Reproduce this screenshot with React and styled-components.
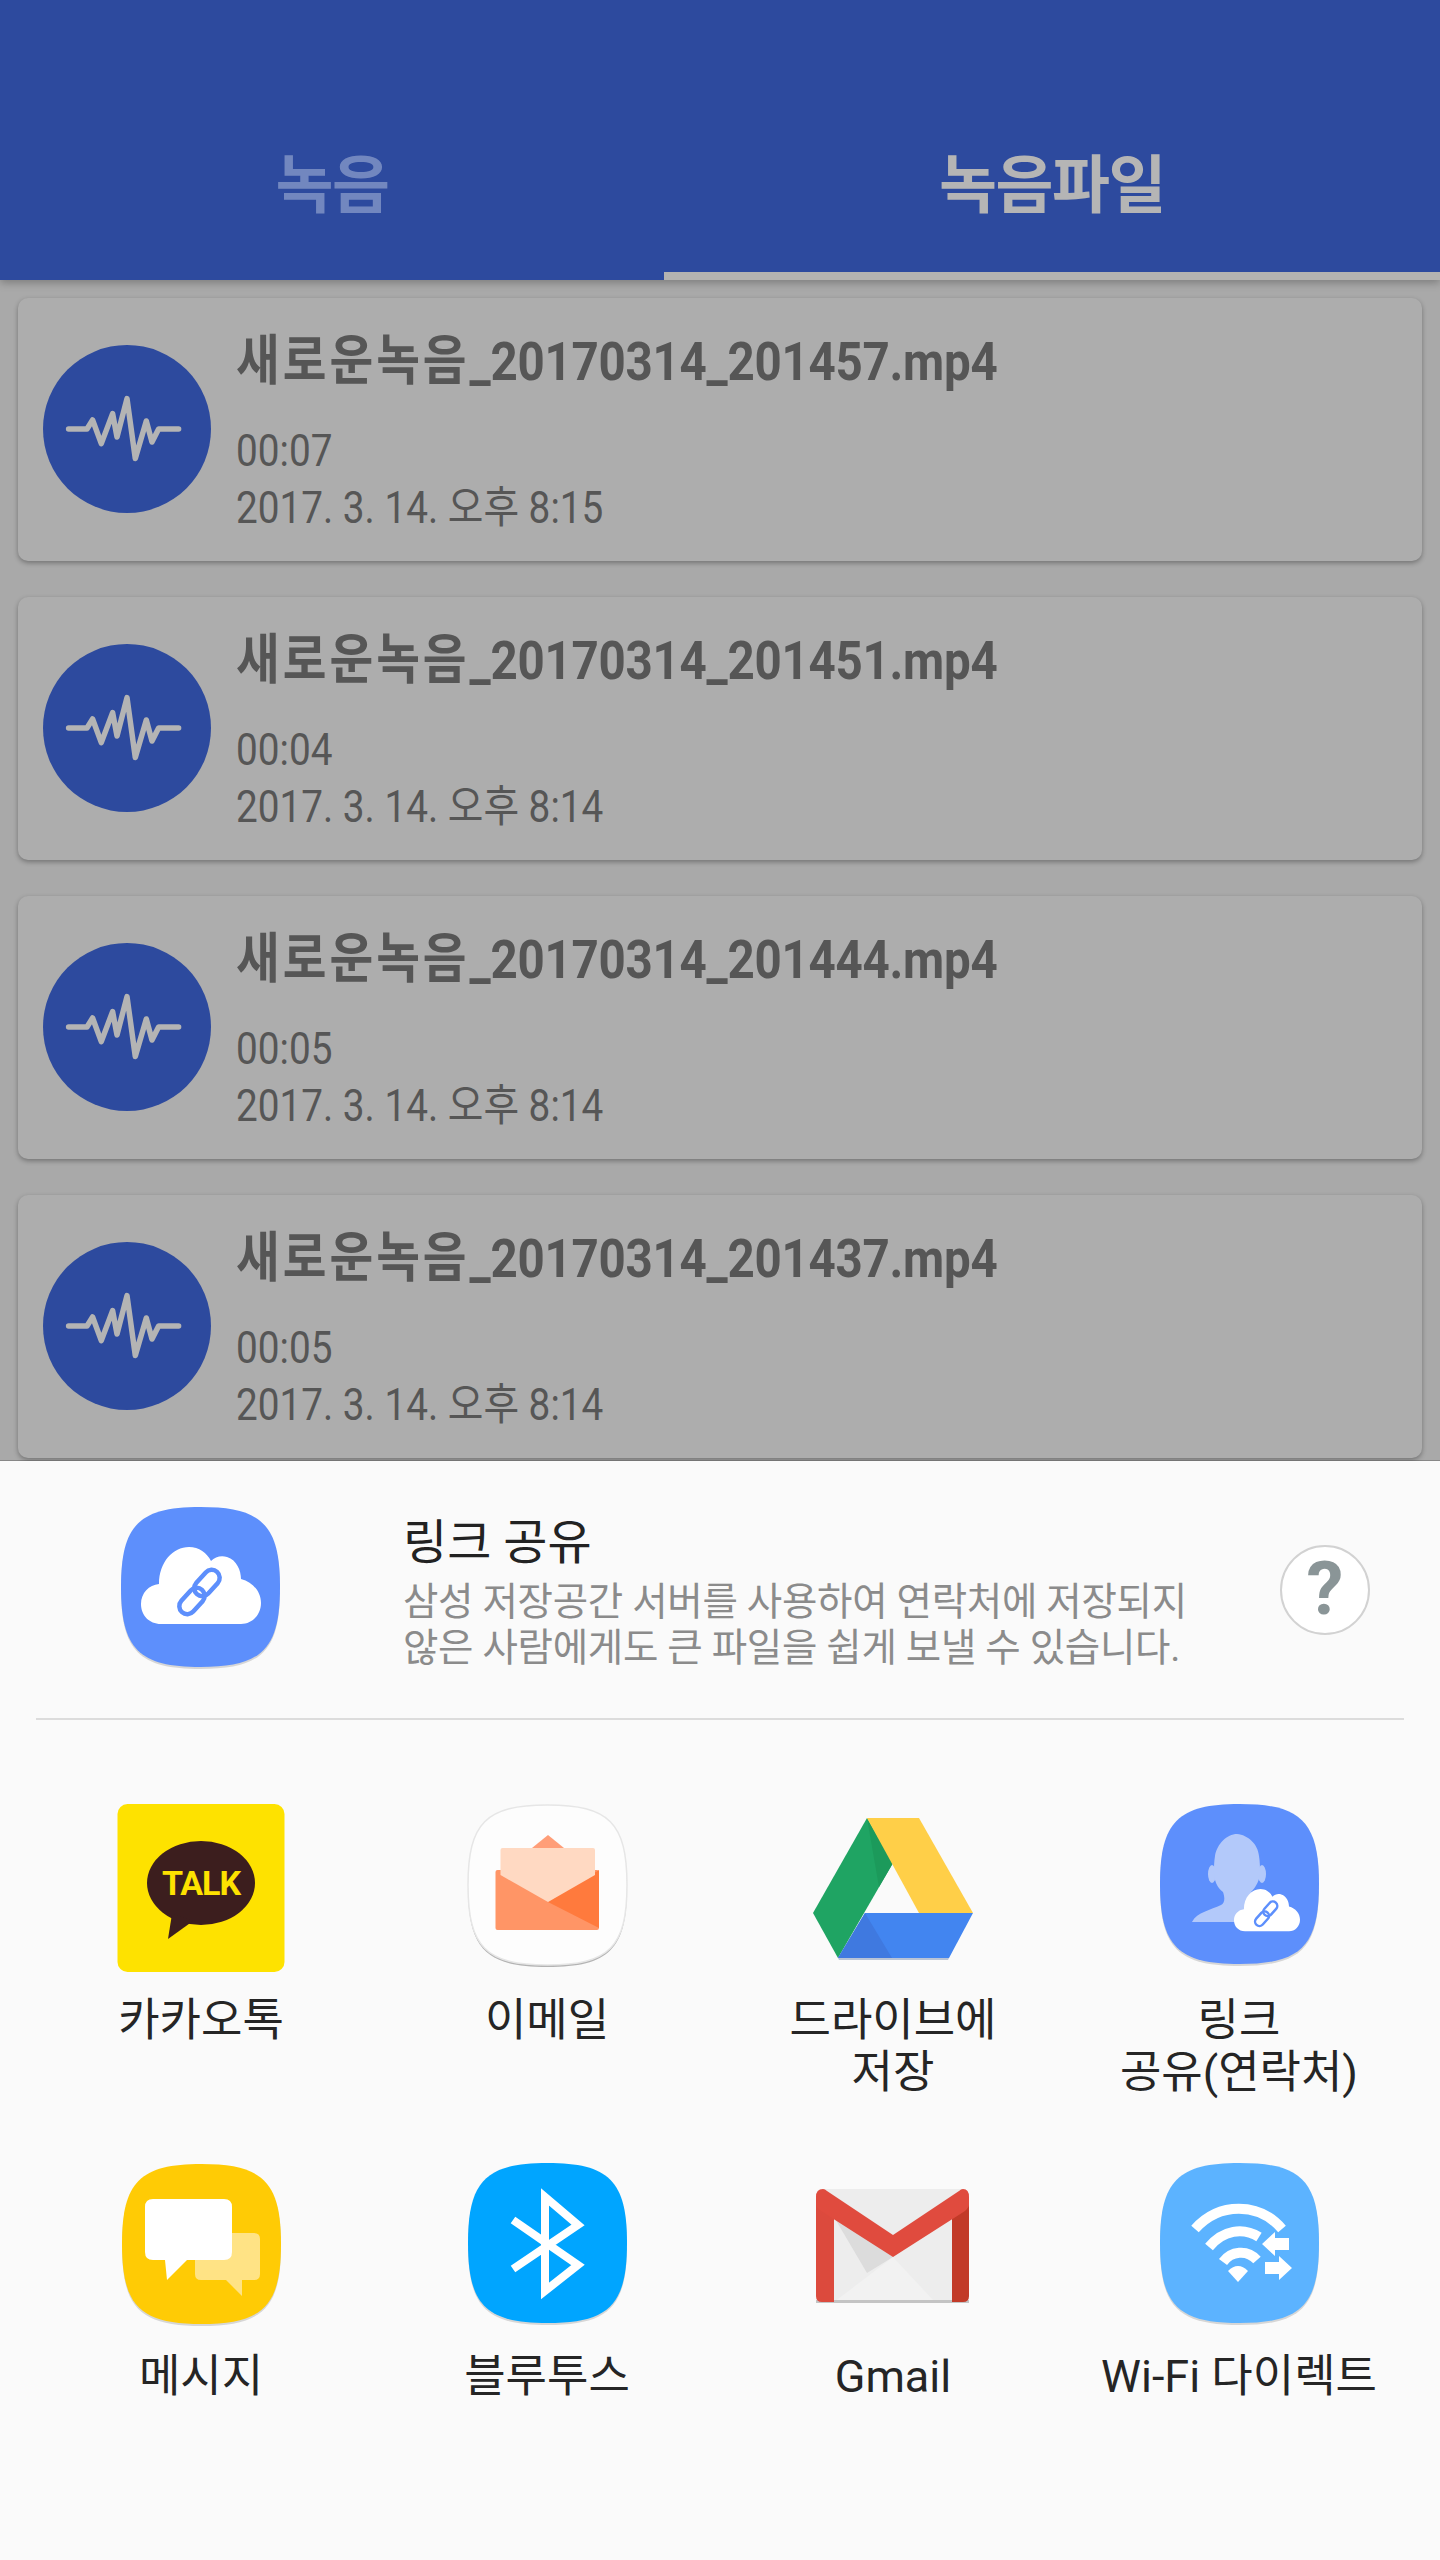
import React from "react";
import styled, { createGlobalStyle } from "styled-components";

const CJK = `Roboto, "Noto Sans CJK KR", sans-serif`;

const GlobalStyle = createGlobalStyle`
  html, body { margin: 0; padding: 0; background: #fafafa; }
  body { font-family: ${CJK}; }
`;

const Page = styled.div`
  width: 1440px;
  height: 2560px;
  display: flex;
  flex-direction: column;
  overflow: hidden;
`;

const TabBar = styled.div`
  height: 280px;
  flex: none;
  display: flex;
  background: #2d4a9e;
  box-shadow: 0 3px 8px rgba(0, 0, 0, 0.25);
  position: relative;
`;

const Tab = styled.div`
  flex: ${props => (props.$active ? "0 0 776px" : "0 0 664px")};
  box-sizing: border-box;
  padding-top: 146px;
  text-align: center;
  font-size: 63px;
  line-height: 80px;
  font-weight: 700;
  letter-spacing: -1.5px;
  color: ${props => (props.$active ? "#b5b5b5" : "#7287bf")};
  border-bottom: ${props => (props.$active ? "8px solid #b4b3b1" : "0")};
`;

const List = styled.div`
  height: 1181px;
  flex: none;
  box-sizing: border-box;
  overflow: hidden;
  background: #a9a9a9;
  padding: 18px 18px 0;
  display: flex;
  flex-direction: column;
  gap: 36px;
`;

const Card = styled.div`
  height: 263px;
  flex: none;
  box-sizing: border-box;
  display: flex;
  align-items: center;
  padding: 0 0 2px 25px;
  background: #adadad;
  border-radius: 10px;
  box-shadow: 0 2px 5px rgba(0, 0, 0, 0.32);
`;

const Badge = styled.svg`
  width: 168px;
  height: 168px;
  flex: none;
  margin-right: 25px;
`;

const CardText = styled.div`
  align-self: flex-start;
  padding-top: 30px;
  color: #565656;
`;

const FileName = styled.div`
  font-size: 54px;
  line-height: 68px;
  font-weight: 700;
  letter-spacing: -0.28px;
  transform: scaleX(0.88);
  transform-origin: left center;
  white-space: nowrap;
`;

const Hangul = styled.span`
  letter-spacing: 3.4px;
`;

const Meta = styled.div`
  font-size: 44px;
  line-height: 57px;
  transform: scaleX(0.88);
  transform-origin: left center;
  white-space: nowrap;
  margin-top: ${props => (props.$first ? "27px" : "0")};
`;

const Sheet = styled.div`
  flex: 1;
  background: #fafafa;
  box-shadow: 0 -1px 0 rgba(0, 0, 0, 0.2);
  position: relative;
`;

const ShareRow = styled.div`
  height: 257px;
  display: flex;
  align-items: center;
  padding-left: 114px;
`;

const IconSlot = styled.svg`
  width: 172px;
  height: 172px;
  flex: none;
  display: block;
  overflow: visible;
`;

const ShareText = styled.div`
  flex: 1;
  margin-left: 117px;
  padding-top: 4px;
`;

const ShareTitle = styled.div`
  font-size: 48px;
  line-height: 62px;
  color: #222;
`;

const ShareDesc = styled.div`
  margin-top: 5px;
  font-size: 38.5px;
  line-height: 46px;
  letter-spacing: -0.3px;
  color: #8b8b8b;
  white-space: pre-line;
`;

const HelpButton = styled.div`
  width: 90px;
  height: 90px;
  flex: none;
  box-sizing: border-box;
  margin-right: 70px;
  padding-bottom: 2px;
  border: 2px solid #d2d2d2;
  border-radius: 50%;
  background: #fff;
  display: flex;
  align-items: center;
  justify-content: center;
  font-size: 74px;
  font-weight: 700;
  color: #8a9597;
`;

const Divider = styled.div`
  height: 2px;
  margin: 0 36px;
  background: #dcdcdc;
`;

const Grid = styled.div`
  display: grid;
  grid-template-columns: repeat(4, 346px);
  grid-auto-rows: 359px;
  padding: 82px 28px 0;
`;

const Tile = styled.div`
  display: flex;
  flex-direction: column;
  align-items: center;
`;

const TileLabel = styled.div`
  margin-top: ${props => (props.$low ? "18px" : "21px")};
  font-size: 45px;
  line-height: 52px;
  text-align: center;
  color: #252525;
  white-space: pre-line;
`;

const SQUIRCLE = "M0 80C0 18 18 0 79.5 0S159 18 159 80S141 160 79.5 160S0 142 0 80Z";

const Squircle = ({ fill, x = 7, y = 3, stroke }) => (
  <g transform={`translate(${x} ${y})`}>
    <path d={SQUIRCLE} fill="rgba(0,0,0,0.14)" transform="translate(0 2)" />
    <path d={SQUIRCLE} fill={fill} stroke={stroke} strokeWidth={stroke ? 1.5 : 0} />
  </g>
);

// cloud with the chain link, drawn in a 120x77 box
const LinkCloud = ({ transform, color }) => (
  <g transform={transform}>
    <path
      d="M20 77C8 77 0 68 0 57C0 46 8 38 18 37C18 15 32 0 48 0C58 0 66 6 70 14C74 10 80 8 86 10C96 13 100 24 100 32C112 35 120 45 120 56C120 68 111 77 100 77Z"
      fill="#fff"
    />
    <g fill="none" stroke={color} strokeWidth="4.5">
      <rect x="-8" y="-15" width="16" height="30" rx="8" transform="translate(66 36) rotate(42)" />
      <rect x="-8" y="-15" width="16" height="30" rx="8" transform="translate(51 54) rotate(42)" />
    </g>
  </g>
);

const WaveBadge = () => (
  <Badge viewBox="0 0 168 168">
    <circle cx="84" cy="84" r="84" fill="#2d4a9e" />
    <polyline
      points="25.6,84 44,84 49.6,75 58.3,98.6 69.6,68.6 74,92 84,53.6 92.3,113.6 103.3,76 109,97 115.6,84 135.6,84"
      fill="none"
      stroke="#b4b4b4"
      strokeWidth="5.5"
      strokeLinecap="round"
      strokeLinejoin="round"
    />
  </Badge>
);

const ShareLinkIcon = () => (
  <IconSlot viewBox="0 0 172 172">
    <Squircle fill="#5d8ffc" />
    <LinkCloud transform="translate(27 43)" color="#5d8ffc" />
  </IconSlot>
);

const KakaoIcon = () => (
  <IconSlot viewBox="0 0 172 172">
    <rect x="2.5" y="2" width="167" height="168" rx="10" fill="#fee200" />
    <ellipse cx="86" cy="81" rx="54" ry="42" fill="#3c1e1e" />
    <path d="M57 112L53 137L78 119Z" fill="#3c1e1e" />
    <text x="86" y="93" textAnchor="middle" fontFamily="Roboto, sans-serif" fontWeight="700" fontSize="34" letterSpacing="-1" fill="#fee200">
      TALK
    </text>
  </IconSlot>
);

const MailIcon = () => (
  <IconSlot viewBox="0 0 172 172">
    <path d={SQUIRCLE} fill="rgba(0,0,0,0.16)" transform="translate(7 5)" />
    <Squircle fill="#fdfdfd" stroke="#e6e6e6" />
    <path d="M71 46L87 33L103 46Z" fill="#ff9e78" />
    <rect x="34.5" y="68" width="103.5" height="60" rx="2" fill="#ff9566" />
    <path d="M87 100L138 68V126Z" fill="#ff7a3d" />
    <path d="M39.5 48Q39.5 46 41.5 46H132Q134 46 134 48V73L87 100L39.5 73Z" fill="#ffd9c2" />
  </IconSlot>
);

const DriveIcon = () => (
  <IconSlot viewBox="0 0 172 172">
    <polygon points="60,16 86,61 31,156 6,111" fill="#1fa463" />
    <polygon points="60,16 86,61 72,85" fill="#1c9a5b" />
    <polygon points="60,16 112,16 166,111 112,111" fill="#ffcf48" />
    <polygon points="58,111 166,111 142,156 31,156" fill="#4285f0" />
    <polygon points="58,111 85,156 31,156" fill="#3f79e0" />
    <polygon points="31,156 142,156 141,158 32,158" fill="#b9c4d6" />
  </IconSlot>
);

const ContactLinkIcon = () => (
  <IconSlot viewBox="0 0 172 172">
    <Squircle fill="#5d8ffc" y={2} />
    <ellipse cx="59" cy="72" rx="4" ry="9" fill="#b3c9fa" />
    <ellipse cx="109" cy="72" rx="4" ry="9" fill="#b3c9fa" />
    <path
      d="M39 120C44 110 58 108 68 103C72 101 72 96 70 90C64 86 61 78 61 70C61 64 61 60 62 54C64 42 74 32 84 32C95 33 105 42 106 54C107 60 107 66 107 72C106 80 102 86 98 90C97 96 98 100 102 103C112 108 122 110 127 120Z"
      fill="#b3c9fa"
    />
    <LinkCloud transform="translate(81 87) scale(0.55)" color="#5d8ffc" />
  </IconSlot>
);

const MessageIcon = () => (
  <IconSlot viewBox="0 0 172 172">
    <Squircle fill="#ffcb05" />
    <path d="M86 72H139Q145 72 145 78V113Q145 119 139 119H127V135L111 119H86Q80 119 80 113V78Q80 72 86 72Z" fill="#ffe385" />
    <path d="M38 38H109Q117 38 117 46V91Q117 99 109 99H72L52 119L50 99H38Q30 99 30 91V46Q30 38 38 38Z" fill="#fff" />
  </IconSlot>
);

const BluetoothIcon = () => (
  <IconSlot viewBox="0 0 172 172">
    <Squircle fill="#00a5ff" y={2} />
    <polyline
      points="52,59 117,104 84,130 84,36 117,64 52,108"
      fill="none"
      stroke="#fff"
      strokeWidth="8"
      strokeLinejoin="miter"
      strokeMiterlimit="4"
    />
  </IconSlot>
);

const GmailIcon = () => (
  <IconSlot viewBox="0 0 172 172">
    <rect x="9" y="28" width="153" height="113" rx="6" fill="#ededed" />
    <polygon points="27,56 86,96 60,112" fill="#dcdcdc" />
    <polygon points="27,141 86,96 128,141" fill="#f2f2f2" />
    <rect x="9" y="139" width="153" height="3" fill="#c4c4c4" />
    <path d="M9 42V135Q9 141 15 141H27V50Z" fill="#dc4a3d" />
    <path d="M162 42V135Q162 141 156 141H145V50Z" fill="#c23a28" />
    <path d="M9 36Q9 28 16 28Q18 28 20 30L86 74L152 30Q154 28 156 28Q162 28 162 36V44Q162 46 158 50L86 96L14 50Q9 46 9 44Z" fill="#e04b3e" />
  </IconSlot>
);

const WifiIcon = () => (
  <IconSlot viewBox="0 0 172 172">
    <Squircle fill="#5cb3ff" y={2} />
    <g fill="none" stroke="#fff" strokeWidth="10">
      <path d="M42 68C66 41 106 41 129 68" />
      <path d="M56 86C70 69 90 66 106 76" />
      <path d="M70 101C78 90 94 88 104 99" />
    </g>
    <path d="M85 121L75 110Q85 100 95 110Z" fill="#fff" />
    <path d="M109 83L122 71V77H136V89H122V95Z" fill="#fff" />
    <path d="M139 107L126 95V101H112V113H126V119Z" fill="#fff" />
  </IconSlot>
);

const files = [
  { name: "_20170314_201457.mp4", length: "00:07", date: "2017. 3. 14. 오후 8:15" },
  { name: "_20170314_201451.mp4", length: "00:04", date: "2017. 3. 14. 오후 8:14" },
  { name: "_20170314_201444.mp4", length: "00:05", date: "2017. 3. 14. 오후 8:14" },
  { name: "_20170314_201437.mp4", length: "00:05", date: "2017. 3. 14. 오후 8:14" },
];

const targets = [
  { label: "카카오톡", Icon: KakaoIcon },
  { label: "이메일", Icon: MailIcon },
  { label: "드라이브에\n저장", Icon: DriveIcon },
  { label: "링크\n공유(연락처)", Icon: ContactLinkIcon },
  { label: "메시지", Icon: MessageIcon, low: true },
  { label: "블루투스", Icon: BluetoothIcon, low: true },
  { label: "Gmail", Icon: GmailIcon, low: true },
  { label: "Wi-Fi 다이렉트", Icon: WifiIcon, low: true },
];

const App = () => (
  <Page>
    <GlobalStyle />
    <TabBar>
      <Tab>녹음</Tab>
      <Tab $active>녹음파일</Tab>
    </TabBar>
    <List>
      {files.map(file => (
        <Card key={file.name}>
          <WaveBadge />
          <CardText>
            <FileName><Hangul>새로운녹음</Hangul>{file.name}</FileName>
            <Meta $first>{file.length}</Meta>
            <Meta>{file.date}</Meta>
          </CardText>
        </Card>
      ))}
    </List>
    <Sheet>
      <ShareRow>
        <ShareLinkIcon />
        <ShareText>
          <ShareTitle>링크 공유</ShareTitle>
          <ShareDesc>{"삼성 저장공간 서버를 사용하여 연락처에 저장되지\n않은 사람에게도 큰 파일을 쉽게 보낼 수 있습니다."}</ShareDesc>
        </ShareText>
        <HelpButton>?</HelpButton>
      </ShareRow>
      <Divider />
      <Grid>
        {targets.map(({ label, Icon, low }) => (
          <Tile key={label}>
            <Icon />
            <TileLabel $low={low}>{label}</TileLabel>
          </Tile>
        ))}
      </Grid>
    </Sheet>
  </Page>
);

export default App;
